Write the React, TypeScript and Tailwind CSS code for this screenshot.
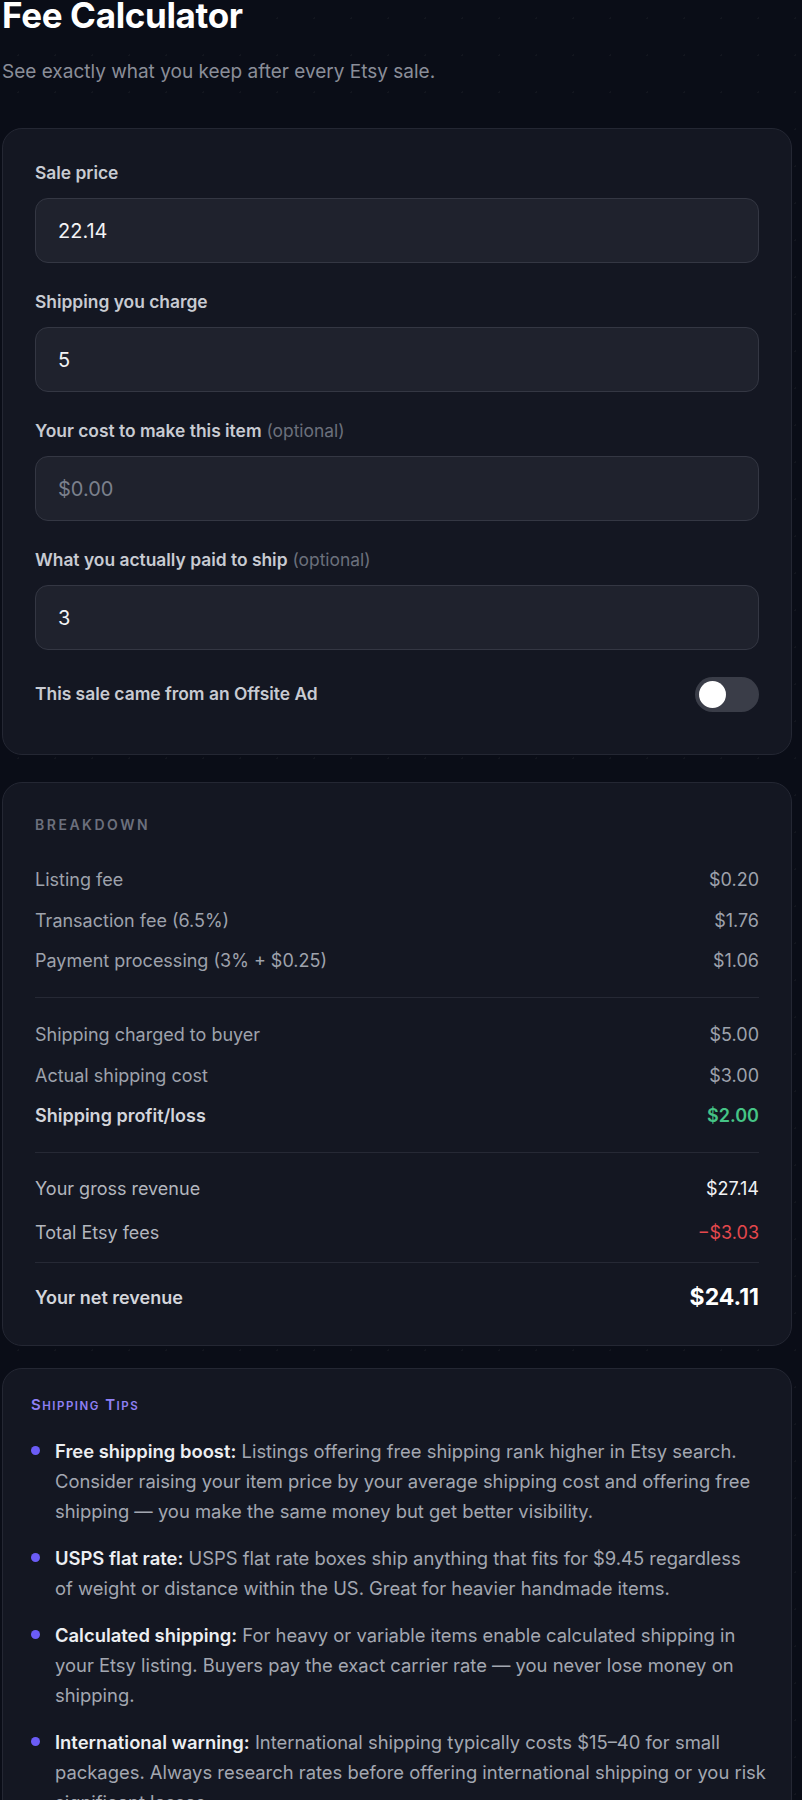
import React from "react";

type Row = { label: string; value: string; labelClass?: string; valueClass?: string };

const fees: Row[] = [
  { label: "Listing fee", value: "$0.20" },
  { label: "Transaction fee (6.5%)", value: "$1.76" },
  { label: "Payment processing (3% + $0.25)", value: "$1.06" },
];

const shipping: Row[] = [
  { label: "Shipping charged to buyer", value: "$5.00" },
  { label: "Actual shipping cost", value: "$3.00" },
  {
    label: "Shipping profit/loss",
    value: "$2.00",
    labelClass: "font-semibold text-[#d3d5db]",
    valueClass: "font-semibold text-[#45c486]",
  },
];

const totals: Row[] = [
  { label: "Your gross revenue", value: "$27.14", labelClass: "text-[#b3b6be]", valueClass: "text-[#f1f2f4]" },
  { label: "Total Etsy fees", value: "\u2212$3.03", labelClass: "text-[#b3b6be]", valueClass: "text-[#e5484d]" },
];

const tips: { title: string; body: React.ReactNode }[] = [
  {
    title: "Free shipping boost:",
    body: "Listings offering free shipping rank higher in Etsy search. Consider raising your item price by your average shipping cost and offering free shipping — you make the same money but get better visibility.",
  },
  {
    title: "USPS flat rate:",
    body: (
      <>
        USPS flat rate boxes ship anything that fits for $9.45 regardless
        <br />
        of weight or distance within the US. Great for heavier handmade items.
      </>
    ),
  },
  {
    title: "Calculated shipping:",
    body: "For heavy or variable items enable calculated shipping in your Etsy listing. Buyers pay the exact carrier rate — you never lose money on shipping.",
  },
  {
    title: "International warning:",
    body: "International shipping typically costs $15–40 for small packages. Always research rates before offering international shipping or you risk significant losses.",
  },
];

function Field({
  label,
  optional,
  value,
  placeholder,
}: {
  label: string;
  optional?: boolean;
  value?: string;
  placeholder?: string;
}) {
  return (
    <div className="flex flex-col">
      <label className="text-[17.4px] leading-[24px] font-semibold text-[#c8cbd2]">
        {label}
        {optional && <span className="font-normal text-[#6b707c]"> (optional)</span>}
      </label>
      <input
        readOnly
        defaultValue={value}
        placeholder={placeholder}
        className="mt-[13px] h-[65px] w-full rounded-[13px] border border-[#343743] bg-[#1f222d] px-[22px] text-[20px] text-[#f2f3f5] outline-none placeholder:text-[#7b808c]"
      />
    </div>
  );
}

function Rows({ rows, gap }: { rows: Row[]; gap: string }) {
  return (
    <div className={`flex flex-col ${gap}`}>
      {rows.map((r) => (
        <div key={r.label} className="flex h-[27px] items-center justify-between text-[18px]">
          <span className={r.labelClass ?? "text-[#9ea2ac]"}>{r.label}</span>
          <span className={r.valueClass ?? "text-[#9ea2ac]"}>{r.value}</span>
        </div>
      ))}
    </div>
  );
}

export default function App() {
  return (
    <div className="min-h-screen w-full bg-[#0a0d17] bg-[radial-gradient(rgba(255,255,255,0.035)_1px,transparent_1px)] bg-[size:37px_37px] font-['Inter',sans-serif] text-white">
      <div className="ml-[2px] w-[790px]">
        <h1 className="text-[35px] leading-[30px] font-bold tracking-[-0.01em] text-white">Fee Calculator</h1>
        <p className="mt-[28px] text-[19px] leading-[28px] text-[#8a8e99]">
          See exactly what you keep after every Etsy sale.
        </p>

        {/* inputs */}
        <div className="mt-[42px] rounded-[20px] border border-[#242733] bg-[#141722] px-[32px] pt-[32px] pb-[42px]">
          <div className="flex flex-col gap-[27px]">
            <Field label="Sale price" value="22.14" />
            <Field label="Shipping you charge" value="5" />
            <Field label="Your cost to make this item" optional placeholder="$0.00" />
            <Field label="What you actually paid to ship" optional value="3" />
            <div className="flex h-[35px] items-center justify-between">
              <span className="text-[17.4px] font-semibold text-[#c8cbd2]">This sale came from an Offsite Ad</span>
              <button className="flex h-[35px] w-[64px] items-center rounded-full bg-[#3a3d48] px-[4px]">
                <span className="h-[27px] w-[27px] rounded-full bg-white" />
              </button>
            </div>
          </div>
        </div>

        {/* breakdown */}
        <div className="mt-[27px] rounded-[20px] border border-[#242733] bg-[#141722] px-[32px] pt-[32px] pb-[32px]">
          <div className="text-[14px] leading-[20px] font-semibold tracking-[0.18em] text-[#6c707d]">BREAKDOWN</div>
          <div className="mt-[31px]">
            <Rows rows={fees} gap="gap-[13.5px]" />
          </div>
          <div className="my-[23px] h-px bg-[#262935]" />
          <Rows rows={shipping} gap="gap-[13.5px]" />
          <div className="mt-[23px] mb-[22px] h-px bg-[#262935]" />
          <Rows rows={totals} gap="gap-[17px]" />
          <div className="mt-[16px] h-px bg-[#262935]" />
          <div className="mt-[18px] flex h-[32px] items-center justify-between">
            <span className="text-[18px] font-semibold text-[#d3d5db]">Your net revenue</span>
            <span className="text-[23px] font-bold text-white">$24.11</span>
          </div>
        </div>

        {/* tips */}
        <div className="mt-[22px] rounded-[20px] border border-[#242733] bg-[#141722] pt-[27px] pr-[24px] pb-[28px] pl-[28px]">
          <div className="text-[15px] leading-[18px] font-semibold tracking-[0.1em] text-[#8f80f5] uppercase">
            S<span className="text-[11.5px]">hipping</span> T<span className="text-[11.5px]">ips</span>
          </div>
          <ul className="mt-[21px] flex flex-col gap-[17px]">
            {tips.map((t) => (
              <li key={t.title} className="flex gap-[15px]">
                <span className="mt-[10px] h-[9px] w-[9px] shrink-0 rounded-full bg-[#6b5cf6]" />
                <p className="text-[18.4px] leading-[30px] text-[#a3a7b1]">
                  <span className="font-semibold text-[#eceef1]">{t.title}</span> {t.body}
                </p>
              </li>
            ))}
          </ul>
        </div>
      </div>
    </div>
  );
}
